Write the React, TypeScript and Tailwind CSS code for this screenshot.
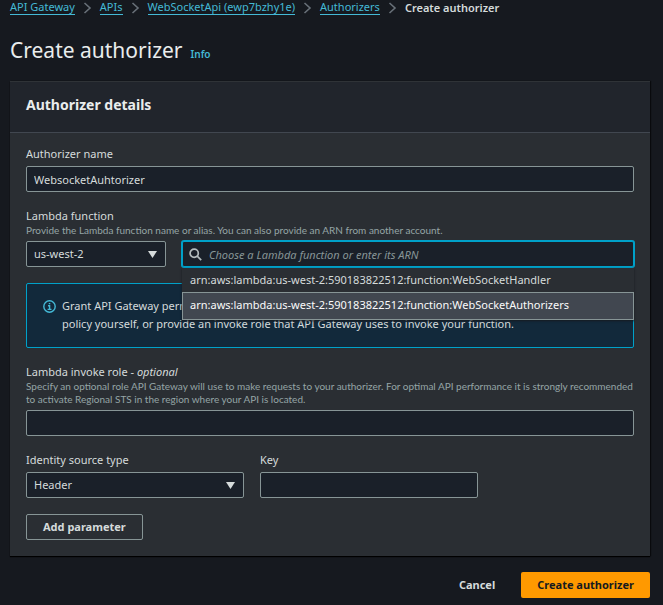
import { Fragment, type ReactNode } from "react";

const crumbs = ["API Gateway", "APIs", "WebSocketApi (ewp7bzhy1e)", "Authorizers"];

const functionArns = [
  "arn:aws:lambda:us-west-2:590183822512:function:WebSocketHandler",
  "arn:aws:lambda:us-west-2:590183822512:function:WebSocketAuthorizers",
];

const control =
  "block h-[26px] w-full rounded-[2px] border border-[#879596] bg-[#1a2029] px-[7px] text-[11px] text-[#d5dbdb] outline-none";

function ChevronRight() {
  return (
    <svg className="h-3 w-[9px] shrink-0" viewBox="0 0 9 12" fill="none" stroke="#687078" strokeWidth="1.6" aria-hidden="true">
      <path d="M1.500 1l5.500 5-5.500 5" />
    </svg>
  );
}

function SearchIcon() {
  return (
    <svg className="absolute left-[7px] top-[7px] size-[13px]" viewBox="0 0 13 13" fill="none" stroke="#b4bcbe" strokeWidth="1.7" aria-hidden="true">
      <circle cx="5.2" cy="5.2" r="4.1" />
      <path d="M8.2 8.2l4 4" />
    </svg>
  );
}

function InfoIcon() {
  return (
    <svg className="mt-[3px] size-[13px] shrink-0" viewBox="0 0 13 13" fill="none" stroke="#44b9d6" strokeWidth="1.4" aria-hidden="true">
      <circle cx="6.5" cy="6.5" r="5.7" />
      <path d="M5 5.7h1.6v3.6M4.6 9.4h3.900M5.8 3.6h1.5" />
    </svg>
  );
}

function Select({ id, value, label }: { id: string; value: string; label?: string }) {
  return (
    <div className="relative">
      <select id={id} aria-label={label} defaultValue={value} className={`${control} appearance-none`}>
        <option>{value}</option>
      </select>
      <svg className="pointer-events-none absolute right-[9px] top-[10px] h-[7px] w-[9px]" viewBox="0 0 9 7" fill="#d5dbdb" aria-hidden="true">
        <path d="M0 0h9L4.500 7z" />
      </svg>
    </div>
  );
}

function Label({ htmlFor, children }: { htmlFor: string; children: ReactNode }) {
  return (
    <label htmlFor={htmlFor} className="block text-[11px] leading-4 text-[#d5dbdb]">
      {children}
    </label>
  );
}

function Hint({ children }: { children: ReactNode }) {
  return <p className="font-[Lato,sans-serif] text-[10px] leading-[13px] text-[#95a5a6]">{children}</p>;
}

export default function App() {
  return (
    <div className="min-h-screen bg-[#16191f] pb-[7px] pl-[10px] pr-[13px] font-['Noto_Sans','Open_Sans',sans-serif] text-[#d5dbdb]">
      <nav aria-label="Breadcrumbs" className="flex h-[15px] items-center gap-2 whitespace-nowrap text-[11px] leading-[15px]">
        {crumbs.map((crumb) => (
          <Fragment key={crumb}>
            <a href="#" className="h-[15px] border-b border-[#44b9d6] leading-[14px] text-[#44b9d6]">
              {crumb}
            </a>
            <ChevronRight />
          </Fragment>
        ))}
        <span className="font-semibold leading-[14px]">Create authorizer</span>
      </nav>

      <header className="mt-5 flex items-baseline gap-2">
        <h1 className="text-[21px] leading-[30px] text-[#eaeded]">Create authorizer</h1>
        <a href="#" className="text-[10px] font-semibold text-[#44b9d6]">
          Info
        </a>
      </header>

      <main className="mt-4 border-t border-[#2f3337] bg-[#2a2e33] shadow-[0_1px_1px_#000000,1px_0_1px_#0b0d10]">
        <h2 className="border-b border-[#414750] bg-[#21252c] px-4 pb-[15px] pt-[11px] text-sm font-bold leading-6 text-[#eaeded]">
          Authorizer details
        </h2>

        <form className="flex flex-col gap-4 px-4 pb-4 pt-[13px]">
          <div>
            <Label htmlFor="name">Authorizer name</Label>
            <input id="name" defaultValue="WebsocketAuhtorizer" className={`${control} mt-1`} />
          </div>

          <div>
            <Label htmlFor="lambda">Lambda function</Label>
            <Hint>Provide the Lambda function name or alias. You can also provide an ARN from another account.</Hint>
            <div className="mt-1 grid grid-cols-8 gap-4">
              <div className="col-span-2">
                <Select id="region" label="Region" value="us-west-2" />
              </div>
              <div className="relative col-span-6">
                <input
                  id="lambda"
                  placeholder="Choose a Lambda function or enter its ARN"
                  className="block h-[26px] w-full rounded-[2px] border border-[#00a1c9] bg-[#1a2029] pl-[26px] pr-2 text-[11px] ring-1 ring-[#00a1c9] outline-none placeholder:italic placeholder:text-[#879596]"
                />
                <SearchIcon />
                <ul role="listbox" aria-label="Lambda functions" className="absolute inset-x-0 top-[27px] z-10 bg-[#2a2e33] text-[11px] leading-4 shadow-[0_1px_2px_#16191f]">
                  <li role="option" aria-selected="false" className="px-2 py-1">
                    {functionArns[0]}
                  </li>
                  <li role="option" aria-selected="true" className="border border-[#879596] bg-[#414750] px-[7px] pb-[6px] pt-1 text-[#fafafa]">
                    {functionArns[1]}
                  </li>
                </ul>
              </div>
            </div>
          </div>

          <div className="flex gap-[6px] rounded-[2px] border border-[#00a1c9] bg-[#12293b] px-4 pb-[14px] pt-[13px] text-[11px] leading-[18px]">
            <InfoIcon />
            <p>
              Grant API Gateway permission
              <br />
              policy yourself, or provide an invoke role that API Gateway uses to invoke your function.
            </p>
          </div>

          <div>
            <Label htmlFor="role">
              Lambda invoke role - <i>optional</i>
            </Label>
            <Hint>
              Specify an optional role API Gateway will use to make requests to your authorizer. For optimal API performance it is strongly recommended to activate Regional STS in the region where your API is located.
            </Hint>
            <input id="role" className={`${control} mt-1`} />
          </div>

          <div className="grid grid-cols-8 gap-4">
            <div className="col-span-3">
              <Label htmlFor="source">Identity source type</Label>
              <div className="mt-1">
                <Select id="source" value="Header" />
              </div>
            </div>
            <div className="col-span-3">
              <Label htmlFor="key">Key</Label>
              <input id="key" className={`${control} mt-1`} />
            </div>
          </div>

          <button type="button" className="h-[26px] self-start rounded-[2px] border border-[#879596] px-4 text-[11px] font-bold">
            Add parameter
          </button>
        </form>
      </main>

      <footer className="mt-4 flex justify-end gap-[10px] text-[11px] font-bold">
        <button type="button" className="h-[26px] px-4">
          Cancel
        </button>
        <button type="button" className="h-[26px] rounded-[2px] bg-[#ff9900] px-4 text-[#16191f]">
          Create authorizer
        </button>
      </footer>
    </div>
  );
}
